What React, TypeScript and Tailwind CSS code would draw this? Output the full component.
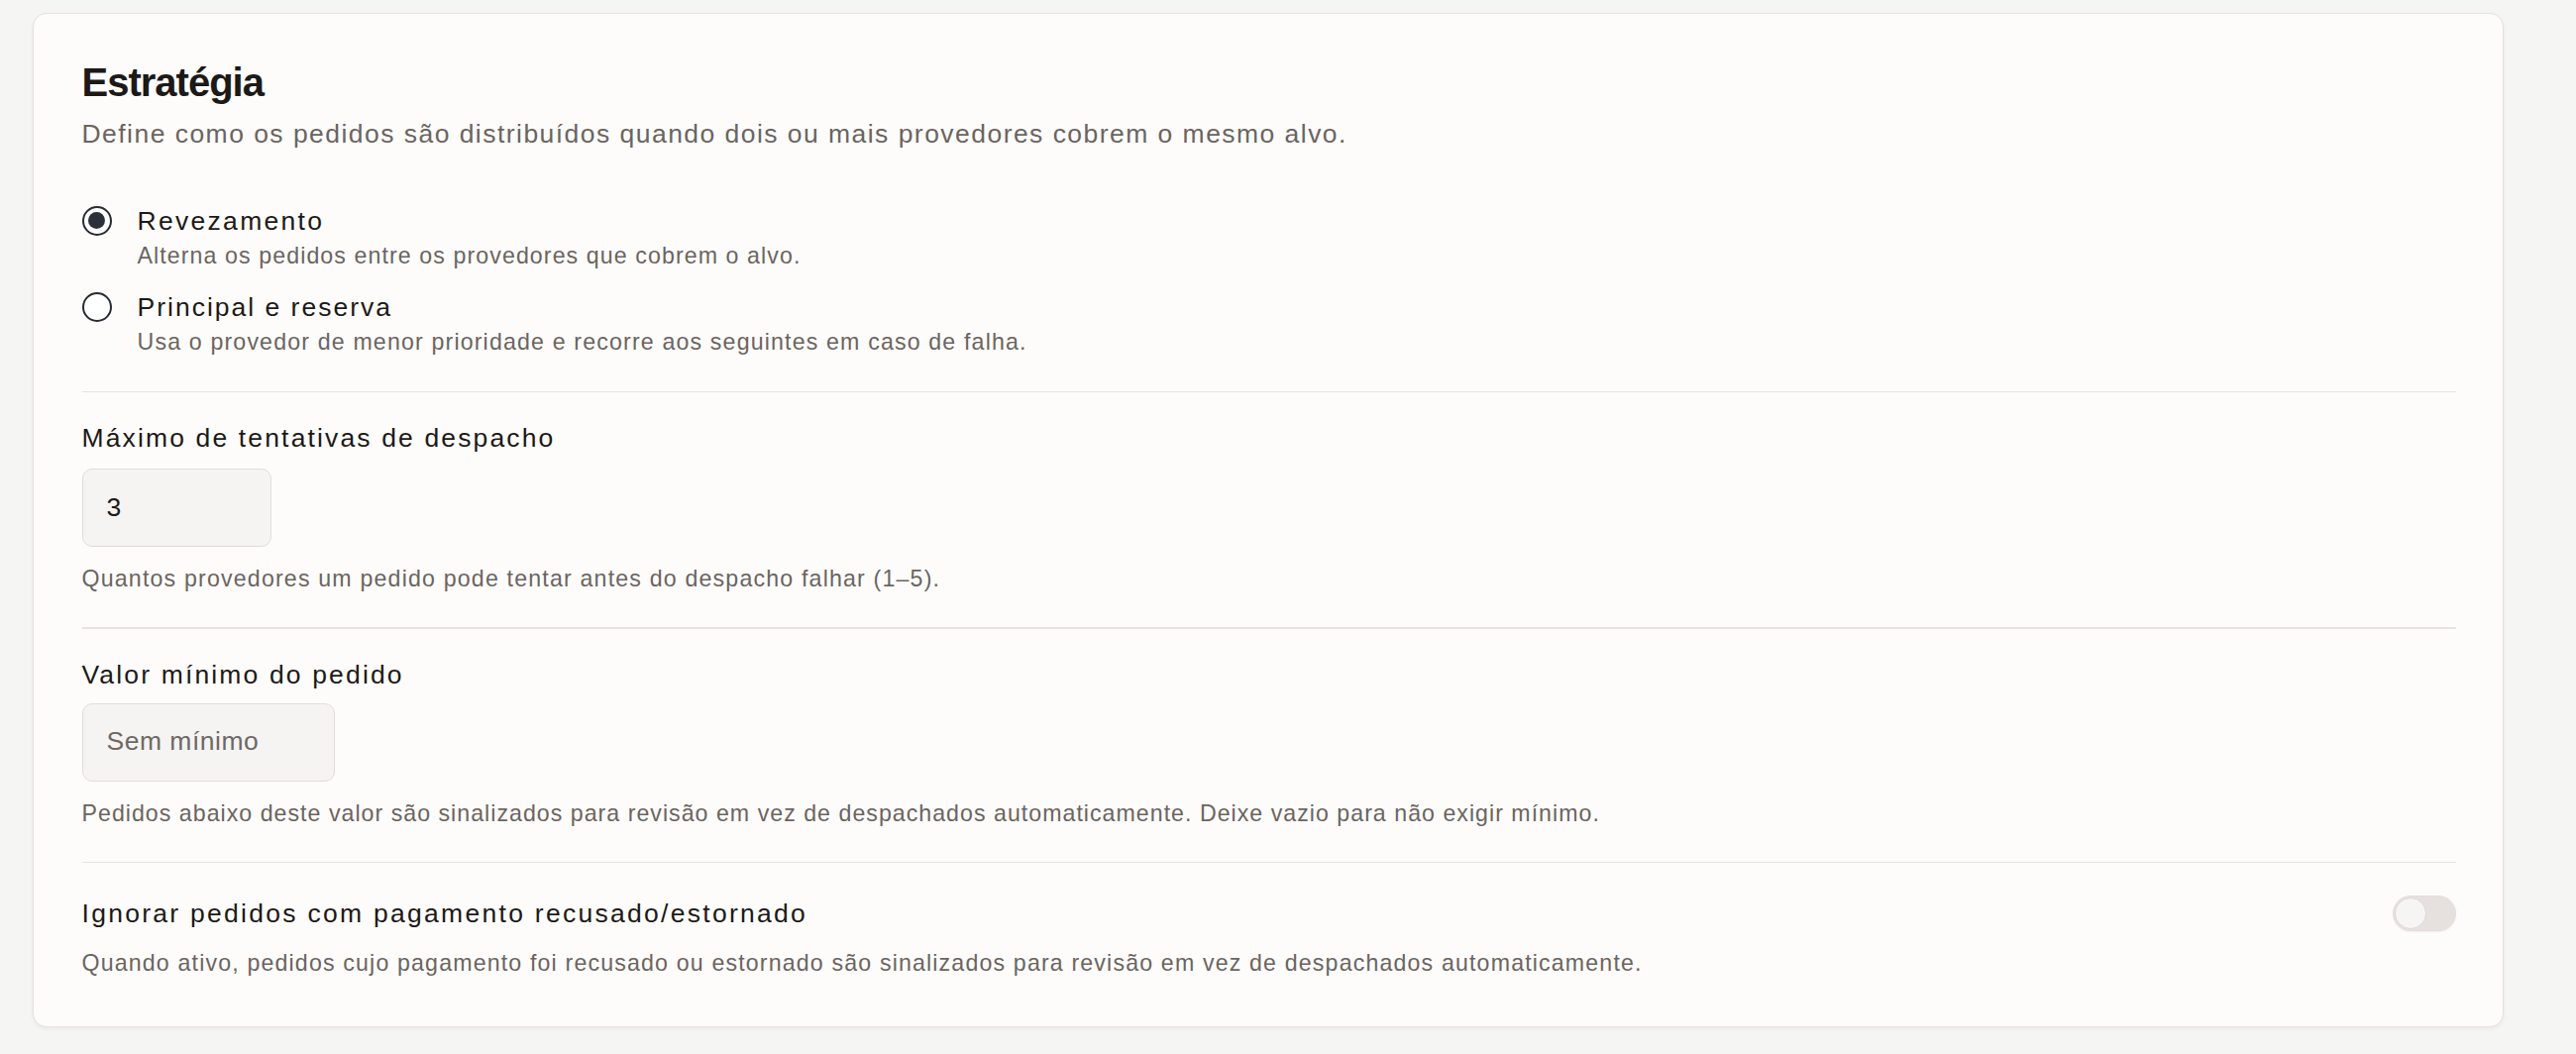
import React from "react";

const font = { fontFamily: '"Liberation Sans", Arial, sans-serif' };

function Radio({ checked }: { checked: boolean }) {
  return (
    <div className="mt-[3px] flex h-[30px] w-[30px] shrink-0 items-center justify-center rounded-full border-[2.5px] border-[#262b34] bg-white">
      {checked && <div className="h-[17px] w-[17px] rounded-full bg-[#2b303b]" />}
    </div>
  );
}

function Divider() {
  return <div className="h-[1.5px] w-full bg-[#e7e2de]" />;
}

export default function App() {
  return (
    <div className="min-h-[1064px] w-full bg-[#f5f5f4] pl-[33px] pt-[13px]" style={font}>
      <div className="w-[2494px] rounded-[14px] border-[1.5px] border-[#e6e1dd] bg-[#fdfcfb] pb-[48px] pl-[48.5px] pr-[47.5px] pt-[44.5px] shadow-[0_2px_4px_rgba(60,40,30,0.06)]">
        <h1 className="text-[40px] font-bold leading-[48px] tracking-[-1px] text-[#1c1917]">Estratégia</h1>
        <p className="mt-[10px] text-[26.5px] leading-[36px] tracking-[1.46px] text-[#6b645f]">
          Define como os pedidos são distribuídos quando dois ou mais provedores cobrem o mesmo alvo.
        </p>

        <div className="mt-[52px] flex gap-[26px]">
          <Radio checked />
          <div className="flex flex-col">
            <span className="text-[26.5px] leading-[36px] tracking-[2.3px] text-[#1c1917]">Revezamento</span>
            <span className="mt-[1px] text-[23.2px] leading-[32px] tracking-[1.08px] text-[#6b645f]">
              Alterna os pedidos entre os provedores que cobrem o alvo.
            </span>
          </div>
        </div>
        <div className="mt-[18px] flex gap-[26px]">
          <Radio checked={false} />
          <div className="flex flex-col">
            <span className="text-[26.5px] leading-[36px] tracking-[2px] text-[#1c1917]">Principal e reserva</span>
            <span className="mt-[1px] text-[23.2px] leading-[32px] tracking-[1.15px] text-[#6b645f]">
              Usa o provedor de menor prioridade e recorre aos seguintes em caso de falha.
            </span>
          </div>
        </div>

        <div className="mt-[34px]">
          <Divider />
        </div>

        <div className="pt-[28px]">
          <div className="text-[26.5px] leading-[36px] tracking-[2.14px] text-[#1c1917]">Máximo de tentativas de despacho</div>
          <div className="mt-[13px] flex h-[79px] w-[191px] items-center rounded-[10px] border-[1.5px] border-[#e2dcd8] bg-[#f5f4f3] pl-[24px] text-[26.5px] text-[#1c1917]">
            3
          </div>
          <div className="mt-[16px] text-[23.2px] leading-[32px] tracking-[1.17px] text-[#6b645f]">
            Quantos provedores um pedido pode tentar antes do despacho falhar (1–5).
          </div>
        </div>

        <div className="mt-[33px]">
          <Divider />
        </div>

        <div className="pt-[28px]">
          <div className="text-[26.5px] leading-[36px] tracking-[2.15px] text-[#1c1917]">Valor mínimo do pedido</div>
          <div className="mt-[11px] flex h-[79px] w-[255px] items-center rounded-[10px] border-[1.5px] border-[#e2dcd8] bg-[#f5f4f3] pl-[24px] text-[26.5px] tracking-[0.5px] text-[#6f6863]">
            Sem mínimo
          </div>
          <div className="mt-[16px] text-[23.2px] leading-[32px] tracking-[1.01px] text-[#6b645f]">
            Pedidos abaixo deste valor são sinalizados para revisão em vez de despachados automaticamente. Deixe vazio para não exigir mínimo.
          </div>
        </div>

        <div className="mt-[33px]">
          <Divider />
        </div>

        <div className="pt-[33px]">
          <div className="flex items-center justify-between">
            <div className="text-[26.5px] leading-[36px] tracking-[2.28px] text-[#1c1917]">
              Ignorar pedidos com pagamento recusado/estornado
            </div>
            <div className="flex h-[36px] w-[64px] items-center rounded-full border-[1.5px] border-[#e4dfdb] bg-[#e6e1de] pl-[1px] shadow-[0_1px_2px_rgba(0,0,0,0.05)]">
              <div className="h-[32px] w-[32px] rounded-full border-[1.5px] border-[#e0dad6] bg-[#f6f5f4]" />
            </div>
          </div>
          <div className="mt-[16px] text-[23.2px] leading-[32px] tracking-[1.15px] text-[#6b645f]">
            Quando ativo, pedidos cujo pagamento foi recusado ou estornado são sinalizados para revisão em vez de despachados automaticamente.
          </div>
        </div>
      </div>
    </div>
  );
}
